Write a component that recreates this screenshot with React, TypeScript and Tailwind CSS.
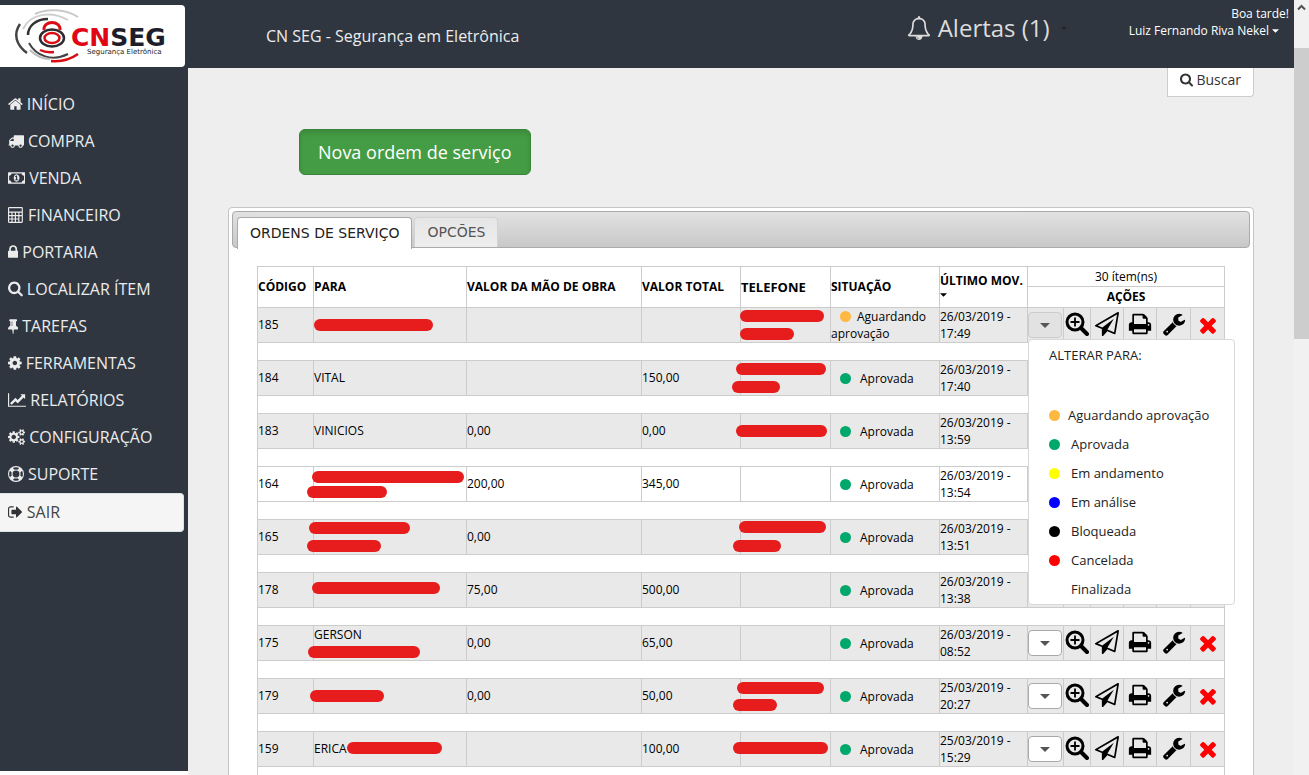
import React from "react";

type Glyph = { box: string; d: string };

const glyphs: Record<string, Glyph> = {
  home: {
    box: "64 0 1664 1792",
    d: "M1472 992v480q0 26-19 45t-45 19h-384v-384h-256v384h-384q-26 0-45-19t-19-45v-480q0-1 .5-3t.5-3l575-474 575 474q1 2 1 6zm223-69l-62 74q-8 9-21 11h-3q-13 0-21-7l-692-577-692 577q-12 8-24 7-13-2-21-11l-62-74q-8-10-7-23.5t11-21.5l719-599q32-26 76-26t76 26l244 204v-195q0-14 9-23t23-9h192q14 0 23 9t9 23v408l219 182q10 8 11 21.5t-7 23.5z",
  },
  truck: {
    box: "0 0 1792 1792",
    d: "M640 1408q0-52-38-90t-90-38-90 38-38 90 38 90 90 38 90-38 38-90zm-384-512h384v-256h-158q-13 0-22 9l-195 195q-9 9-9 22v30zm1280 512q0-52-38-90t-90-38-90 38-38 90 38 90 90 38 90-38 38-90zm256-1088v1024q0 15-4 26.5t-13.5 18.5-16.5 11.5-23.5 6-22.5 2-25.5 0-22.5-.5q0 106-75 181t-181 75-181-75-75-181h-384q0 106-75 181t-181 75-181-75-75-181h-64q-3 0-22.5.5t-25.5 0-22.5-2-23.5-6-16.5-11.5-13.5-18.5-4-26.5q0-26 19-45t45-19v-320q0-8-.5-35t0-38 2.5-34.5 6.5-37 14-30.5 22.5-30l198-198q19-19 50.5-32t58.5-13h160v-192q0-26 19-45t45-19h1024q26 0 45 19t19 45z",
  },
  money: {
    box: "0 0 1920 1792",
    d: "M768 1152h384v-96h-128v-448h-114l-148 137 77 80q42-37 55-57h2v288h-128v96zm512-256q0 70-21 142t-59.5 134-101.5 101-138 39-138-39-101.5-101-59.5-134-21-142 21-142 59.5-134 101.5-101 138-39 138 39 101.5 101 59.5 134 21 142zm512 256v-512q-106 0-181-75t-75-181h-1152q0 106-75 181t-181 75v512q106 0 181 75t75 181h1152q0-106 75-181t181-75zm128-832v1152q0 26-19 45t-45 19h-1792q-26 0-45-19t-19-45v-1152q0-26 19-45t45-19h1792q26 0 45 19t19 45z",
  },
  calculator: {
    box: "0 0 1792 1792",
    d: "M128 0h1408q128 0 128 128v1536q0 128-128 128h-1408q-128 0-128-128v-1536q0-128 128-128zM128 128v384h1408v-384zM128 640v256h256v-256zM512 640v256h256v-256zM896 640v256h256v-256zM1280 640v256h256v-256zM128 1024v256h256v-256zM512 1024v256h256v-256zM896 1024v256h256v-256zM1280 1024v640h256v-640zM128 1408v256h256v-256zM512 1408v256h256v-256zM896 1408v256h256v-256z",
  },
  lock: {
    box: "320 0 1152 1792",
    d: "M640 768h512v-192q0-106-75-181t-181-75-181 75-75 181v192zm832 96v576q0 40-28 68t-68 28h-960q-40 0-68-28t-28-68v-576q0-40 28-68t68-28h32v-192q0-184 132-316t316-132 316 132 132 316v192h32q40 0 68 28t28 68z",
  },
  search: {
    box: "64 64 1664 1792",
    d: "M1216 832q0-185-131.5-316.5t-316.5-131.5-316.5 131.5-131.5 316.5 131.5 316.5 316.5 131.5 316.5-131.5 131.5-316.5zm512 832q0 52-38 90t-90 38q-54 0-90-38l-343-342q-179 124-399 124-143 0-273.5-55.5t-225-150-150-225-55.5-273.5 55.5-273.5 150-225 225-150 273.5-55.5 273.5 55.5 225 150 150 225 55.5 273.5q0 220-124 399l343 343q37 37 37 90z",
  },
  tack: {
    box: "320 0 1152 1792",
    d: "M800 864v-448q0-14-9-23t-23-9-23 9-9 23v448q0 14 9 23t23 9 23-9 9-23zm672 352q0 26-19 45t-45 19h-429l-51 483q-2 12-10.5 20.5t-20.5 8.5h-1q-27 0-32-27l-76-485h-404q-26 0-45-19t-19-45q0-123 78.5-221.5t177.5-98.5v-512q-52 0-90-38t-38-90 38-90 90-38h640q52 0 90 38t38 90-38 90-90 38v512q99 0 177.5 98.5t78.5 221.5z",
  },
  cog: {
    box: "128 0 1536 1792",
    d: "M1152 896q0-106-75-181t-181-75-181 75-75 181 75 181 181 75 181-75 75-181zm512-109v222q0 12-8 23t-20 13l-185 28q-19 54-39 91 35 50 107 138 10 12 10 25t-9 23q-27 37-99 108t-94 71q-12 0-26-9l-138-108q-44 23-91 38-16 136-29 186-7 28-36 28h-222q-14 0-24.5-8.5t-11.5-21.5l-28-184q-49-16-90-37l-141 107q-10 9-25 9-14 0-25-11-126-114-165-168-7-10-7-23 0-12 8-23 15-21 51-66.5t54-70.5q-27-50-41-99l-183-27q-13-2-21-12.5t-8-23.5v-222q0-12 8-23t19-13l186-28q14-46 39-92-40-57-107-138-10-12-10-24 0-10 9-23 26-36 98.5-107.5t94.5-71.5q13 0 26 10l138 107q44-23 91-38 16-136 29-186 7-28 36-28h222q14 0 24.5 8.5t11.5 21.5l28 184q49 16 90 37l142-107q9-9 24-9 13 0 25 10 129 119 165 170 7 8 7 22 0 12-8 23-15 21-51 66.5t-54 70.5q26 50 41 98l183 28q13 2 21 12.5t8 23.5z",
  },
  chart: {
    box: "0 0 2048 1792",
    d: "M2048 1536v128h-2048v-1536h128v1408h1920zm-128-1248v435q0 21-19.5 29.5t-35.5-7.5l-121-121-633 633q-10 10-23 10t-23-10l-233-233-416 416-192-192 585-585q10-10 23-10t23 10l233 233 464-464-121-121q-16-16-7.5-35.5t29.5-19.5h435q14 0 23 9t9 23z",
  },
  cogs: {
    box: "0 0 1920 1792",
    d: "M896 896q0-106-75-181t-181-75-181 75-75 181 75 181 181 75 181-75 75-181zm768 512q0-52-38-90t-90-38-90 38-38 90q0 53 37.5 90.5t90.5 37.5 90.5-37.5 37.5-90.5zm0-1024q0-52-38-90t-90-38-90 38-38 90q0 53 37.5 90.5t90.5 37.5 90.5-37.5 37.5-90.5zm-384 421v185q0 10-7 19.5t-16 10.5l-155 24q-11 35-32 76 34 48 90 115 7 11 7 20 0 12-7 19-23 30-82.5 89.5t-78.5 59.5q-11 0-21-7l-115-90q-37 19-77 31-11 108-23 155-7 24-30 24h-186q-11 0-20-7.5t-10-17.5l-23-153q-34-10-75-31l-118 89q-7 7-20 7-11 0-21-8-144-133-144-160 0-9 7-19 10-14 41-53t47-61q-23-44-35-82l-152-24q-10-1-17-9.5t-7-19.5v-185q0-10 7-19.5t16-10.5l155-24q11-35 32-76-34-48-90-115-7-11-7-20 0-12 7-20 22-30 82-89t79-59q11 0 21 7l115 90q34-18 77-32 11-108 23-154 7-24 30-24h186q11 0 20 7.5t10 17.5l23 153q34 10 75 31l118-89q8-7 20-7 11 0 21 8 144 133 144 160 0 8-7 19-12 16-42 54t-45 60q23 48 34 82l152 23q10 2 17 10.5t7 19.5zm640 533v140q0 16-149 31-12 27-30 52 51 113 51 138 0 4-4 7-122 71-124 71-8 0-46-47t-52-68q-20 2-30 2t-30-2q-14 21-52 68t-46 47q-2 0-124-71-4-3-4-7 0-25 51-138-18-25-30-52-149-15-149-31v-140q0-16 149-31 13-29 30-52-51-113-51-138 0-4 4-7 4-2 35-20t59-34 30-16q8 0 46 46.5t52 67.5q20-2 30-2t30 2q51-71 92-112l6-2q4 0 124 70 4 3 4 7 0 25-51 138 17 23 30 52 149 15 149 31zm0-1024v140q0 16-149 31-12 27-30 52 51 113 51 138 0 4-4 7-122 71-124 71-8 0-46-47t-52-68q-20 2-30 2t-30-2q-14 21-52 68t-46 47q-2 0-124-71-4-3-4-7 0-25 51-138-18-25-30-52-149-15-149-31v-140q0-16 149-31 13-29 30-52-51-113-51-138 0-4 4-7 4-2 35-20t59-34 30-16q8 0 46 46.5t52 67.5q20-2 30-2t30 2q51-71 92-112l6-2q4 0 124 70 4 3 4 7 0 25-51 138 17 23 30 52 149 15 149 31z",
  },
  ring: {
    box: "0 0 1792 1792",
    d: "M896 0a896 896 0 1 1 0 1792a896 896 0 1 1 0-1792zM896 128q-190 0-361 90l194 194q82-28 167-28t167 28l194-194q-171-90-361-90zM218 1257l194-194q-28-82-28-167t28-167l-194-194q-90 171-90 361t90 361zM896 1664q190 0 361-90l-194-194q-82 28-167 28t-167-28l-194 194q171 90 361 90zM896 1280a384 384 0 1 0 0-768a384 384 0 1 0 0 768zM1380 1063l194 194q90-171 90-361t-90-361l-194 194q28 82 28 167t-28 167z",
  },
  signout: {
    box: "64 0 1664 1792",
    d: "M704 1440q0 4 1 20t.5 26.5-3 23.5-10 19.5-20.5 6.5h-320q-119 0-203.5-84.5t-84.5-203.5v-704q0-119 84.5-203.5t203.5-84.5h320q13 0 22.5 9.5t9.5 22.5q0 4 1 20t.5 26.5-3 23.5-10 19.5-20.5 6.5h-320q-66 0-113 47t-47 113v704q0 66 47 113t113 47h312l11.5 1 11.5 3 8 5.5 7 9 2 13.5zm928-544q0 26-19 45l-544 544q-19 19-45 19t-45-19-19-45v-288h-448q-26 0-45-19t-19-45v-384q0-26 19-45t45-19h448v-288q0-26 19-45t45-19 45 19l544 544q19 19 19 45z",
  },
  bell: {
    box: "0 0 1792 1792",
    d: "M912 1696q0-16-16-16-59 0-101.5-42.5t-42.5-101.5q0-16-16-16t-16 16q0 73 51.5 124.5t124.5 51.5q16 0 16-16zm-666-288h1300q-266-300-266-832 0-51-24-105t-69-103-121.5-80.5-169.5-31.5-169.5 31.5-121.5 80.5-69 103-24 105q0 532-266 832zm1482 0q0 52-38 90t-90 38h-448q0 106-75 181t-181 75-181-75-75-181h-448q-52 0-90-38t-38-90q50-42 91-88t85-119.5 74.5-158.5 50-206 19.5-260q0-152 117-282.5t307-158.5q-8-19-8-39 0-40 28-68t68-28 68 28 28 68q0 20-8 39 190 28 307 158.5t117 282.5q0 139 19.5 260t50 206 74.5 158.5 85 119.5 91 88z",
  },
  plane: {
    box: "0 0 1792 1792",
    d: "M1764 11q33 24 27 64l-256 1536q-5 29-32 45-14 8-31 8-11 0-24-5l-527-215-298 327q-18 21-47 21-14 0-23-4-19-7-30-23.5t-11-36.5v-452l-472-193q-37-14-40-55-3-39 32-59l1664-960q35-21 68 2zm-342 1499l221-1323-1434 827 336 137 863-639-478 797z",
  },
  print: {
    box: "0 0 1792 1792",
    d: "M448 1536h896v-256h-896v256zm0-640h896v-384h-160q-40 0-68-28t-28-68v-160h-640v640zm1152 64q0-26-19-45t-45-19-45 19-19 45 19 45 45 19 45-19 19-45zm128 0v416q0 13-9.5 22.5t-22.5 9.5h-224v160q0 40-28 68t-68 28h-960q-40 0-68-28t-28-68v-160h-224q-13 0-22.5-9.5t-9.5-22.5v-416q0-79 56.5-135.5t135.5-56.5h64v-544q0-40 28-68t68-28h672q40 0 88 20t76 48l152 152q28 28 48 76t20 88v256h64q79 0 135.5 56.5t56.5 135.5z",
  },
  wrench: {
    box: "0 0 1792 1792",
    d: "M448 1472q0-26-19-45t-45-19-45 19-19 45 19 45 45 19 45-19 19-45zm644-420l-682 682q-37 37-90 37-52 0-91-37l-106-108q-38-36-38-90 0-53 38-91l681-681q39 98 114.5 173.5t173.5 114.5zm634-435q0 39-23 106-47 134-164.5 217.5t-258.5 83.5q-185 0-316.5-131.5t-131.5-316.5 131.5-316.5 316.5-131.5q58 0 121.5 16.5t107.5 46.5q16 11 16 28t-16 28l-293 169v224l193 107q5-3 79-48.5t135.5-81 70.5-35.5q15 0 23.5 10t8.5 25z",
  },
  times: {
    box: "0 0 1792 1792",
    d: "M1490 1322q0 40-28 68l-136 136q-28 28-68 28t-68-28l-294-294-294 294q-28 28-68 28t-68-28l-136-136q-28-28-28-68t28-68l294-294-294-294q-28-28-28-68t28-68l136-136q28-28 68-28t68 28l294 294 294-294q28-28 68-28t68 28l136 136q28 28 28 68t-28 68l-294 294 294 294q28 28 28 68z",
  },
};

function Icon({ name, className }: { name: string; className: string }) {
  const g = glyphs[name];
  return (
    <svg viewBox={g.box} className={`w-auto shrink-0 fill-current ${className}`} aria-hidden="true">
      <path d={g.d} fillRule="evenodd" />
    </svg>
  );
}

function ZoomIn() {
  return (
    <svg viewBox="0 0 24 24" className="mx-auto size-6" fill="none" stroke="currentColor" aria-hidden="true">
      <circle cx="10" cy="10" r="8" strokeWidth="3" />
      <path d="M16 16l6 6" strokeWidth="4" strokeLinecap="round" />
      <path d="M10 5.500v9M5.500 10h9" strokeWidth="1.800" />
    </svg>
  );
}

function Caret({ className }: { className: string }) {
  return (
    <svg viewBox="0 0 10 5" className={className} aria-hidden="true">
      <path d="M0 0h10L5 5z" fill="currentColor" />
    </svg>
  );
}

function Logo() {
  return (
    <svg viewBox="0 0 185 62" className="block h-[62px] w-[185px] rounded-r-sm bg-white" role="img" aria-label="CNSEG Segurança Eletrônica">
      <g fill="none" strokeWidth="2">
        <path d="M35 9C47 3 66 4 78 12" stroke="#c9c9c9" />
        <path d="M23 24C30 9 50 5 68 15" stroke="#cfcfcf" />
        <path d="M20 19C13 29 16 40 27 48" stroke="#444" strokeWidth="2.500" />
        <path d="M28 30C28 21 36 14 48 14" stroke="#333" strokeWidth="2.500" />
        <path d="M29 38C36 51 52 57 68 49" stroke="#444" />
        <path d="M30 45C35 50 42 54 50 54" stroke="#bbb" />
        <path d="M51 56C62 57 71 54 78 49" stroke="#d90d12" strokeWidth="2.500" />
        <path d="M40 45Q46 48 54 47" stroke="#d90d12" strokeWidth="2.500" />
        <path d="M44 25C43 15 61 15 60 25" stroke="#d90d12" strokeWidth="3" />
        <ellipse cx="52" cy="33" rx="12" ry="8.500" fill="#fff" stroke="#2b2b30" strokeWidth="2.500" />
        <ellipse cx="52" cy="33" rx="7.500" ry="5" stroke="#d90d12" strokeWidth="2.500" />
      </g>
      <text x="71" y="41" fontFamily="DejaVu Sans, sans-serif" fontSize="25" fontWeight="700" fill="#e10613">
        CN<tspan fill="#1d1d2b">SEG</tspan>
      </text>
      <text x="87" y="49" fontFamily="DejaVu Sans, sans-serif" fontSize="7" fill="#222">
        Segurança Eletrônica
      </text>
    </svg>
  );
}

const menu = [
  ["home", "INÍCIO"],
  ["truck", "COMPRA"],
  ["money", "VENDA"],
  ["calculator", "FINANCEIRO"],
  ["lock", "PORTARIA"],
  ["search", "LOCALIZAR ÍTEM"],
  ["tack", "TAREFAS"],
  ["cog", "FERRAMENTAS"],
  ["chart", "RELATÓRIOS"],
  ["cogs", "CONFIGURAÇÃO"],
  ["ring", "SUPORTE"],
];

function Sidebar() {
  return (
    <aside className="mb-1 w-[188px] shrink-0 bg-[#2f3640] pt-[5px]">
      <Logo />
      <nav className="mt-[18px] text-base text-[#ececec]">
        {menu.map(([icon, label]) => (
          <a key={label} href="#" className="flex h-[37px] items-center gap-1 pl-2">
            <Icon name={icon} className="h-4" />
            {label}
          </a>
        ))}
        <a
          href="#"
          className="mt-px mr-1 flex h-[39px] items-center gap-1 rounded-r border border-l-0 border-[#dce3e6] bg-[#f5f5f5] pb-0.5 pl-2 text-[#444]"
        >
          <Icon name="signout" className="h-4 text-[#333]" />
          SAIR
        </a>
      </nav>
    </aside>
  );
}

type Bar = [left: number, top: number, width: number];
type Order = {
  code: string;
  name?: string;
  nameTop?: boolean;
  nameBars?: Bar[];
  labor?: string;
  total?: string;
  phoneBars?: Bar[];
  waiting?: boolean;
  date: string;
  time: string;
  plain?: boolean;
};

const orders: Order[] = [
  { code: "185", nameBars: [[0, 11, 119]], phoneBars: [[-1, 2, 84], [-1, 20, 54]], waiting: true, date: "26/03/2019", time: "17:49" },
  { code: "184", name: "VITAL", total: "150,00", phoneBars: [[-5, 2, 90], [-9, 20, 48]], date: "26/03/2019", time: "17:40" },
  { code: "183", name: "VINICIOS", labor: "0,00", total: "0,00", phoneBars: [[-5, 11, 91]], date: "26/03/2019", time: "13:59" },
  { code: "164", nameBars: [[-2, 4, 152], [-7, 19, 80]], labor: "200,00", total: "345,00", date: "26/03/2019", time: "13:54", plain: true },
  { code: "165", nameBars: [[-5, 2, 101], [-7, 20, 74]], labor: "0,00", phoneBars: [[-2, 1, 87], [-8, 20, 48]], date: "26/03/2019", time: "13:51" },
  { code: "178", nameBars: [[-2, 9, 128]], labor: "75,00", total: "500,00", date: "26/03/2019", time: "13:38" },
  { code: "175", name: "GERSON", nameTop: true, nameBars: [[-6, 20, 112]], labor: "0,00", total: "65,00", date: "26/03/2019", time: "08:52" },
  { code: "179", nameBars: [[-4, 11, 74]], labor: "0,00", total: "50,00", phoneBars: [[-4, 3, 87], [-8, 20, 44]], date: "25/03/2019", time: "20:27" },
  { code: "159", name: "ERICA", nameBars: [[33, 10, 95]], total: "100,00", phoneBars: [[-8, 10, 95]], date: "25/03/2019", time: "15:29" },
];

function Masked({ bars = [], children, top }: { bars?: Bar[]; children?: React.ReactNode; top?: boolean }) {
  return (
    <div className={top ? "relative h-[34px]" : "relative flex h-[34px] items-center pb-0.5"}>
      {children}
      {bars.map(([left, y, width]) => (
        <span key={y} className="absolute h-3 rounded-full bg-[#e71d1d]" style={{ left, top: y, width }} />
      ))}
    </div>
  );
}

const statuses = [
  ["bg-[#ffb840]", "Aguardando aprovação"],
  ["bg-[#00a86b]", "Aprovada"],
  ["bg-[#ffff00]", "Em andamento"],
  ["bg-[#0000ff]", "Em análise"],
  ["bg-black", "Bloqueada"],
  ["bg-[#ff0000]", "Cancelada"],
  ["bg-transparent", "Finalizada"],
];

function StatusMenu() {
  return (
    <div className="absolute top-[31px] left-0 z-10 h-[266px] w-[207px] rounded border border-[#d8d8d8] bg-white pt-[6px] pl-5 text-left text-[13px] text-[#222]">
      <div className="mb-[37px] text-[13px] leading-[18px]">ALTERAR PARA:</div>
      <ul>
        {statuses.map(([color, label], i) => (
          <li key={label} className="h-[29px]">
            <button type="button" className={`flex h-full items-center whitespace-nowrap ${i === 0 ? "gap-2" : "gap-[11px]"}`}>
              <span className={`size-[11px] rounded-full ${color}`} />
              {label}
            </button>
          </li>
        ))}
      </ul>
    </div>
  );
}

const actions = [
  ["plane", "Enviar"],
  ["print", "Imprimir"],
  ["wrench", "Editar"],
  ["times", "Excluir"],
];

function OrderRow({ order, open }: { order: Order; open: boolean }) {
  return (
    <>
      <tr className={order.plain ? "bg-white" : "bg-[#e9e9e9]"}>
        <td>
          <div className="pb-0.5">{order.code}</div>
        </td>
        <td>
          <Masked bars={order.nameBars} top={order.nameTop}>
            {order.name}
          </Masked>
        </td>
        <td>
          <div className="pb-0.5">{order.labor}</div>
        </td>
        <td>
          <div className="pb-0.5">{order.total}</div>
        </td>
        <td>
          <Masked bars={order.phoneBars} />
        </td>
        <td>
          {order.waiting ? (
            <>
              <span className="mr-1.5 ml-[9px] inline-block size-[11px] rounded-full bg-[#ffb840] align-[-1px]" />
              Aguardando aprovação
            </>
          ) : (
            <>
              <span className="mr-[9px] ml-[9px] inline-block size-[11px] rounded-full bg-[#00a86b] align-[-1px]" />
              Aprovada
            </>
          )}
        </td>
        <td>
          {order.date} -<br />
          {order.time}
        </td>
        <td>
          <div className="relative">
            <div className="flex h-[34px] items-center">
              <button
                type="button"
                aria-label="Alterar situação"
                className={`flex h-[26px] w-[34px] items-center justify-center rounded border text-[#555] ${
                  open ? "border-[#ccc] bg-[#e2e2e2]" : "border-[#aaa] bg-white"
                }`}
              >
                <Caret className="h-[5px] w-[10px]" />
              </button>
            </div>
            {open && <StatusMenu />}
          </div>
        </td>
        <td>
          <button type="button" aria-label="Visualizar" className="block w-full pb-0.5">
            <ZoomIn />
          </button>
        </td>
        {actions.map(([icon, label]) => (
          <td key={label}>
            <button type="button" aria-label={label} className={`block w-full ${icon === "times" ? "text-[#ff0000]" : "pb-0.5"}`}>
              <Icon name={icon} className="mx-auto h-6" />
            </button>
          </td>
        ))}
      </tr>
      <tr>
        <td colSpan={13} className="h-[18px]" />
      </tr>
    </>
  );
}

function OrdersTable() {
  return (
    <table className="w-full table-fixed border-collapse text-left text-[12px] leading-[17px] text-black [&_td]:border [&_td]:border-[#ccc] [&_td]:p-0 [&_th]:border [&_th]:border-[#ccc] [&_th]:p-0">
      <colgroup>
        <col className="w-[56px]" />
        <col className="w-[153px]" />
        <col className="w-[175px]" />
        <col className="w-[99px]" />
        <col className="w-[90px]" />
        <col className="w-[109px]" />
        <col className="w-[88px]" />
        <col className="w-[36px]" />
        <col className="w-[27px]" />
        <col className="w-[33px]" />
        <col className="w-[33px]" />
        <col className="w-[34px]" />
        <col className="w-[34px]" />
      </colgroup>
      <thead>
        <tr className="h-5">
          <th rowSpan={2}>
            <div className="pb-0.5">CÓDIGO</div>
          </th>
          <th rowSpan={2}>
            <div className="pb-0.5">PARA</div>
          </th>
          <th rowSpan={2}>
            <div className="pb-0.5">VALOR DA MÃO DE OBRA</div>
          </th>
          <th rowSpan={2}>
            <div className="pb-0.5">VALOR TOTAL</div>
          </th>
          <th rowSpan={2} className="text-[13px]">TELEFONE</th>
          <th rowSpan={2}>
            <div className="pb-0.5">SITUAÇÃO</div>
          </th>
          <th rowSpan={2} className="whitespace-nowrap">
            ÚLTIMO MOV.
            <Caret className="mt-1 mb-1.5 h-1 w-[7px]" />
          </th>
          <th colSpan={6} className="text-center font-normal">30 ítem(ns)</th>
        </tr>
        <tr className="h-[21px]">
          <th colSpan={6} className="text-center">
            <div className="pb-0.5">AÇÕES</div>
          </th>
        </tr>
      </thead>
      <tbody>
        {orders.map((o, i) => (
          <OrderRow key={o.code} order={o} open={i === 0} />
        ))}
      </tbody>
    </table>
  );
}

export default function App() {
  return (
    <div className="flex h-screen overflow-hidden bg-white font-['Open_Sans',sans-serif]">
      <Sidebar />
      <div className="flex min-w-0 flex-1 flex-col bg-[#eee]">
        <header className="flex h-[68px] shrink-0 justify-between bg-[#2f3640] pr-[5px] pl-[78px] text-[#ececec]">
          <h1 className="pt-6 text-base">CN SEG - Segurança em Eletrônica</h1>
          <div className="flex">
            <button type="button" className="mr-[62px] flex h-14 items-center gap-[7px] text-2xl text-[#dcdcdc]">
              <Icon name="bell" className="h-6" />
              Alertas (1)
              <Caret className="ml-1 h-[3px] w-[6px] text-[#222]" />
            </button>
            <div className="pt-[5px] text-right text-[12px] leading-[17px] text-white">
              <div>Boa tarde!</div>
              <button type="button" className="mr-[10px] flex items-center gap-[3px]">
                Luiz Fernando Riva Nekel
                <Caret className="h-1 w-[7px]" />
              </button>
            </div>
          </div>
        </header>
        <main className="min-h-0 flex-1 overflow-hidden px-10">
          <div className="flex justify-end">
            <button
              type="button"
              className="flex h-[29px] items-center gap-[3px] rounded-br border border-t-0 border-[#ccc] bg-white px-3 pb-1 text-sm text-[#333]"
            >
              <Icon name="search" className="h-[14px]" />
              Buscar
            </button>
          </div>
          <button
            type="button"
            className="mt-8 ml-[71px] block h-[46px] rounded-md border border-[#398439] bg-[#449d44] px-[18px] text-lg text-white shadow-[inset_0_3px_5px_rgba(0,0,0,0.125)]"
          >
            Nova ordem de serviço
          </button>
          <section className="mt-8 rounded border border-[#c5c5c5] bg-white p-[3px]">
            <div
              role="tablist"
              className="flex h-[37px] gap-[2px] rounded border border-[#aaa] bg-linear-to-b from-[#e2e2e2] to-[#c8c8c8] px-1 pt-[5px] font-['DejaVu_Sans',sans-serif] text-[14px]"
            >
              <button type="button" role="tab" aria-selected="true" className="h-8 rounded-t border border-b-0 border-[#aaa] bg-white px-3 text-[#222]">
                ORDENS DE SERVIÇO
              </button>
              <button type="button" role="tab" aria-selected="false" className="h-[30px] rounded-t border border-b-0 border-[#d3d3d3] bg-linear-to-b from-[#e6e6e6] to-[#eee] px-3 text-[#555]">
                OPCÕES
              </button>
            </div>
            <div className="pt-[18px] pr-[26px] pl-[25px]">
              <OrdersTable />
            </div>
          </section>
        </main>
      </div>
      <div className="flex w-[15px] shrink-0 flex-col bg-[#f1f1f1]" aria-hidden="true">
        <svg viewBox="0 0 15 15" className="size-[15px]" fill="none" stroke="#505050" strokeWidth="2">
          <path d="M4 9.500L7.500 6 11 9.500" />
        </svg>
        <div className="mt-[33px] h-[291px] bg-[#cdcdcd]" />
      </div>
    </div>
  );
}
